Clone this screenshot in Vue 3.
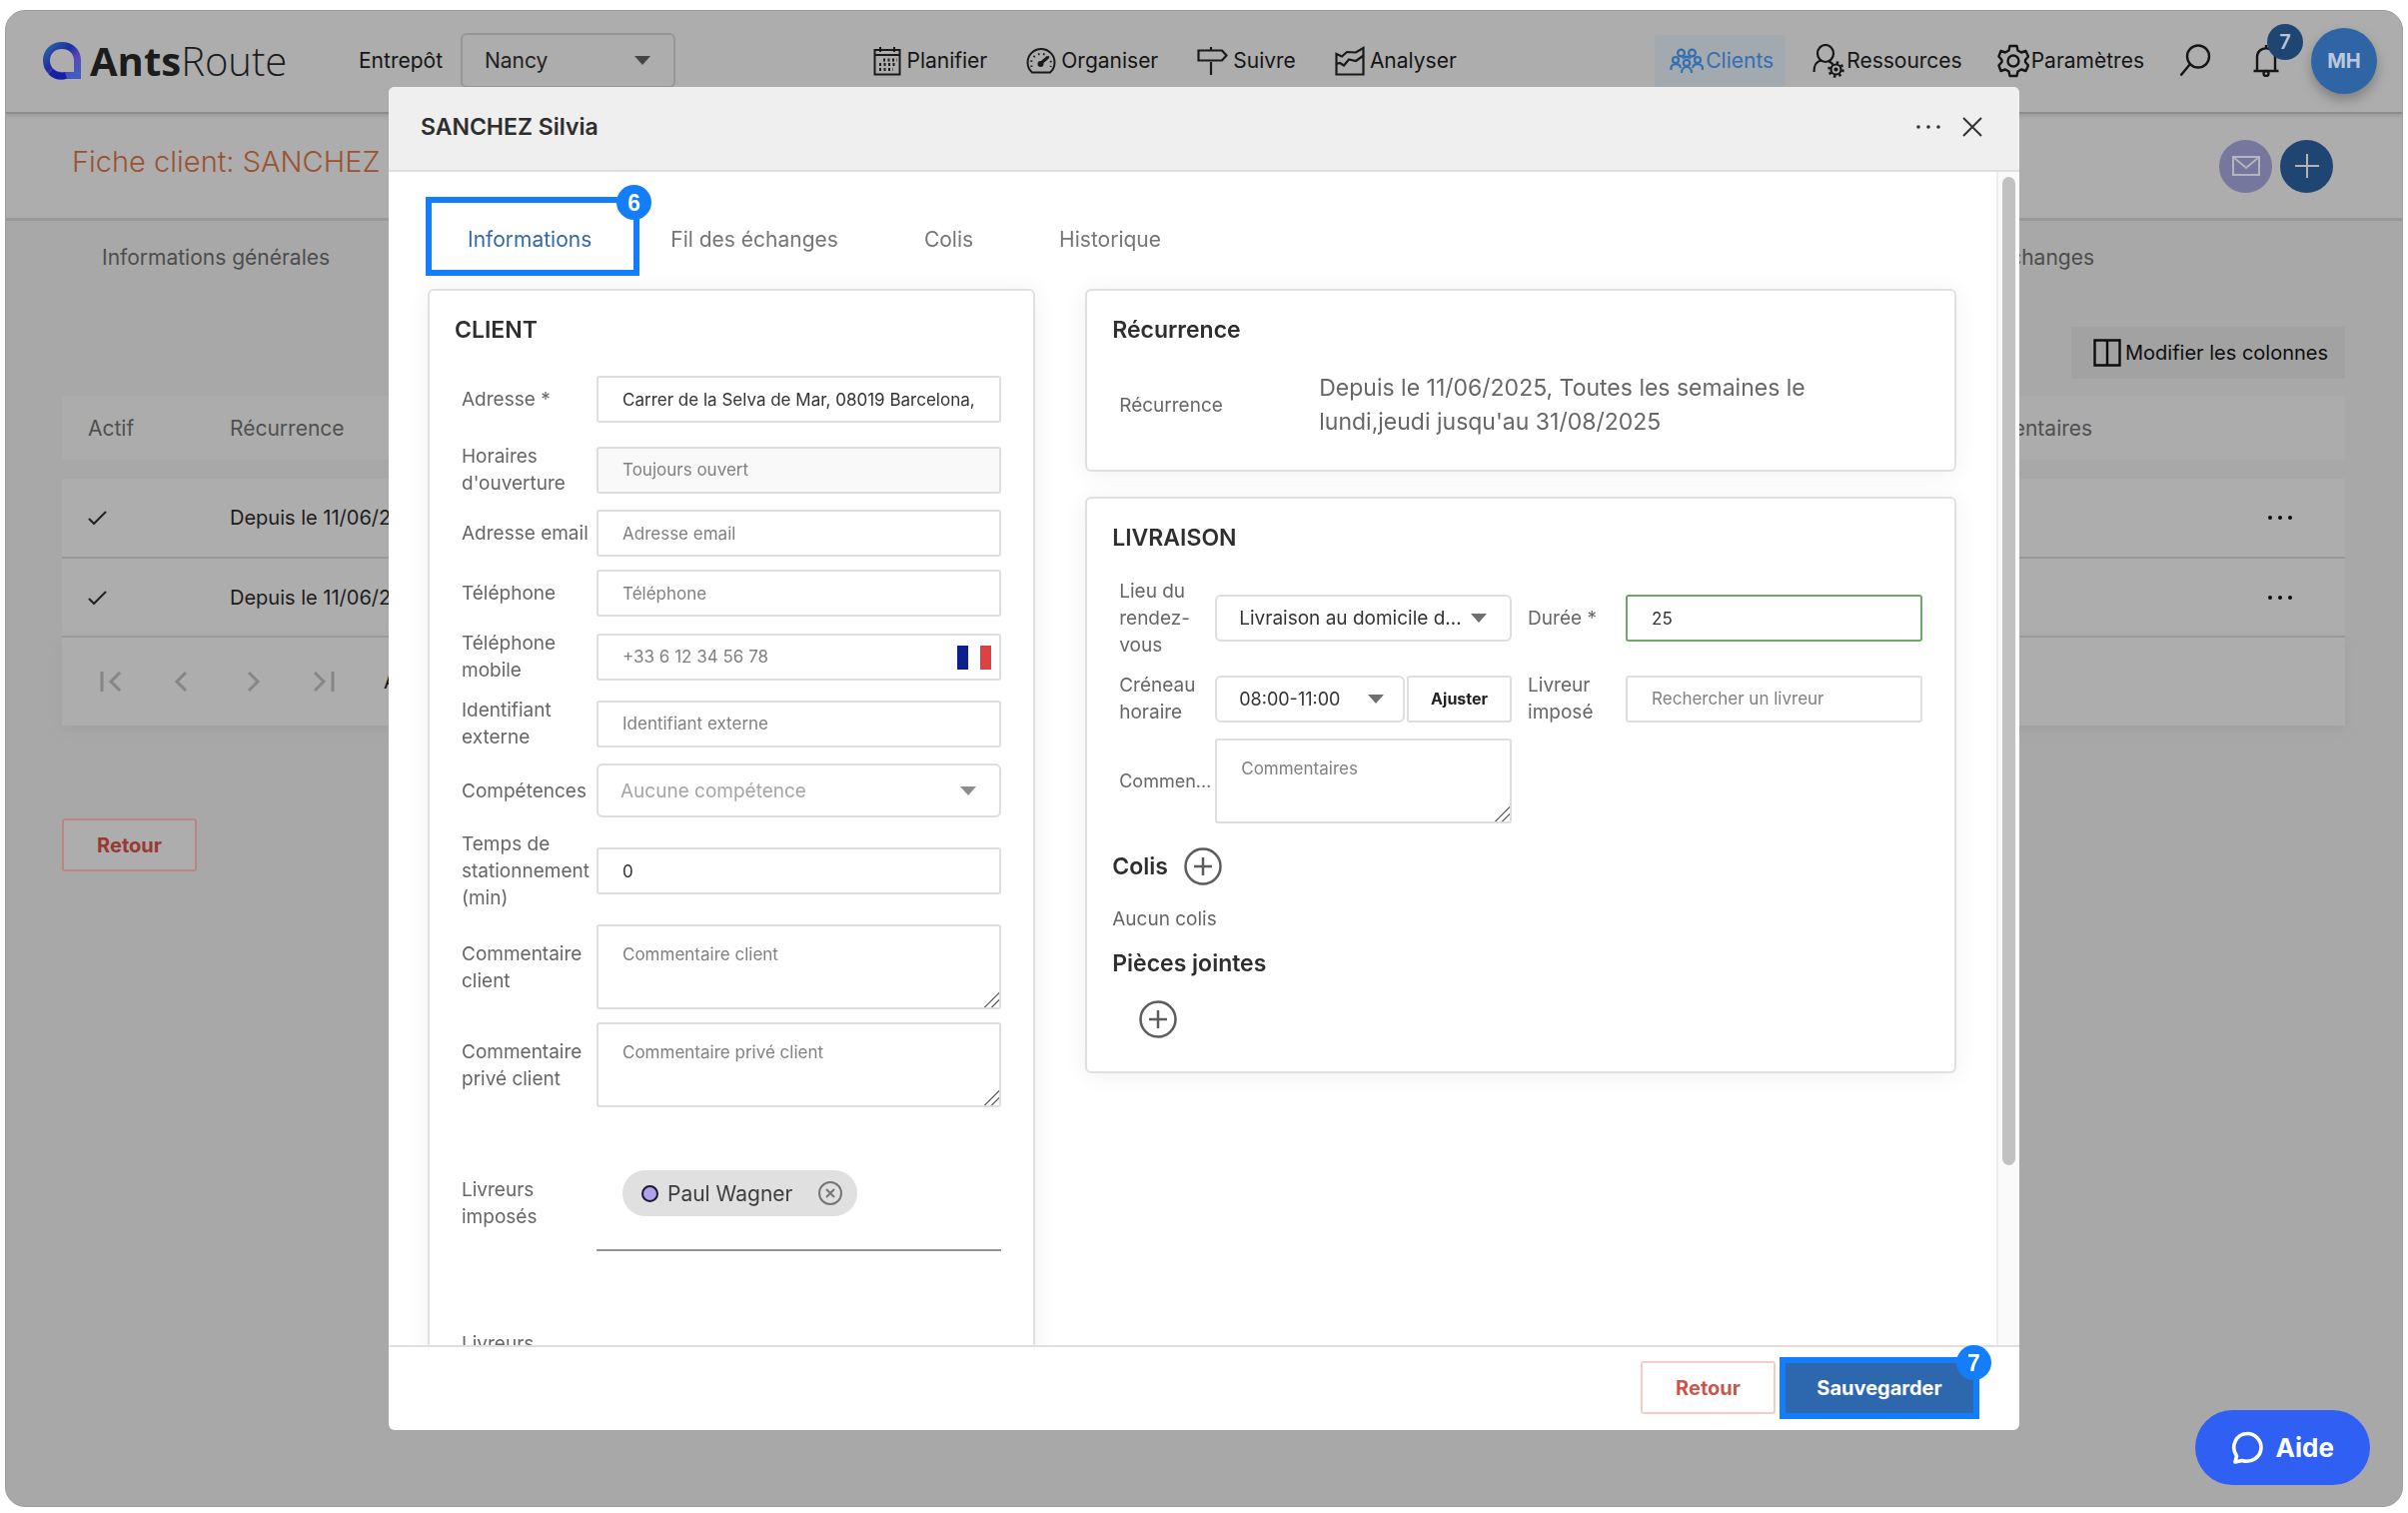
<script setup>
import { ref } from 'vue'

const mainNav = [
  { id: 'plan', label: 'Planifier' },
  { id: 'organise', label: 'Organiser' },
  { id: 'follow', label: 'Suivre' },
  { id: 'analyse', label: 'Analyser' },
]
const tabs = ['Fil des échanges', 'Colis', 'Historique']
const rows = [1, 2]

const address = ref('Carrer de la Selva de Mar, 08019 Barcelona,')
const parking = ref('0')
const duration = ref('25')
</script>

<template>
  <div class="frame">
    <header class="topbar">
      <a href="#" class="logo">
        <svg width="40" height="40" viewBox="0 0 40 40" aria-hidden="true">
          <defs>
            <linearGradient id="ring" x1="0" y1="0" x2="1" y2="1">
              <stop offset="0" stop-color="#2b62a8" />
              <stop offset="0.4" stop-color="#1d2fa0" />
              <stop offset="0.7" stop-color="#5a48b4" />
              <stop offset="1" stop-color="#3c5fc0" />
            </linearGradient>
          </defs>
          <path d="M20 4.500C11 4.500 4.500 11 4.500 19.500S11 34.500 20 34.500H35.500V19.500C35.500 11 29 4.500 20 4.500Z" fill="none" stroke="url(#ring)" stroke-width="7" />
          <path d="M9 31A15.500 15.500 0 0 0 24 34.500" fill="none" stroke="#1420a8" stroke-width="7" />
        </svg>
        <span class="wordmark"><b>Ants</b>Route</span>
      </a>
      <label for="depot" class="depot-label">Entrepôt</label>
      <div class="select depot">
        <select id="depot"><option>Nancy</option></select>
        <svg width="16" height="9" viewBox="0 0 16 9"><path d="M0 0H16L8 9Z" fill="#444" /></svg>
      </div>

      <nav class="main-nav">
        <a v-for="item in mainNav" :key="item.id" href="#" class="nav-item">
          <svg v-if="item.id === 'plan'" width="28" height="30" viewBox="0 0 28 30" fill="none" stroke="#1a1a1a" stroke-width="2">
            <path d="M1.500 4H26.500V28.500H1.500ZM1.500 9H26.500M7 1V6M21 1V6" />
            <path d="M10 14H24M6 18.500H24M6 23.500H20" stroke-width="3" stroke-dasharray="2 2.500" />
          </svg>
          <svg v-else-if="item.id === 'organise'" width="30" height="28" viewBox="0 0 30 28" fill="none" stroke="#1a1a1a" stroke-width="2">
            <path d="M6 25.500A13.500 13.500 0 1 1 24 25.500Z" />
            <path d="M14 17L22 10" stroke-width="3" /><circle cx="14.500" cy="17" r="2" fill="#1a1a1a" />
            <path d="M5.500 20A10 10 0 1 1 24.500 20" stroke-dasharray="1.500 3.700" />
          </svg>
          <svg v-else-if="item.id === 'follow'" width="31" height="30" viewBox="0 0 31 30" fill="none" stroke="#1a1a1a" stroke-width="2.200">
            <path d="M1.500 4.500H25L29.500 9.500L25 14.500H1.500ZM14 1V4.500M14 16V29" />
          </svg>
          <svg v-else width="30" height="30" viewBox="0 0 30 30" fill="none" stroke="#1a1a1a" stroke-width="2.200">
            <path d="M1.500 28.500V8L7 10.500L12 6L21 6.500L28.500 2V28.500ZM1.500 18L5 17L9 19.500L14 13.500L21 15L28 10" />
          </svg>
          <span>{{ item.label }}</span>
        </a>
      </nav>

      <nav class="side-nav">
        <a href="#" class="nav-item active">
          <svg width="34" height="26" viewBox="0 0 34 26" fill="none" stroke="#336fb1" stroke-width="2.200">
            <circle cx="11.500" cy="5" r="3.400" /><circle cx="22.500" cy="5" r="3.400" />
            <circle cx="6" cy="12" r="3" /><circle cx="28" cy="12" r="3" /><circle cx="17" cy="15" r="3.200" />
            <path d="M1.500 22V20C1.500 16 10 14 11 20M33 22V20C33 16 24 14 23 20M12 25C12 17 22 17 22 25M13 10.500Q17 7 21 10.500" />
          </svg>
          <span>Clients</span>
        </a>
        <a href="#" class="nav-item">
          <svg width="32" height="34" viewBox="0 0 32 34" fill="none" stroke="#151515" stroke-width="2.200">
            <ellipse cx="13" cy="9.500" rx="8" ry="8.500" />
            <path d="M1.500 28C1.500 20 5 17 9 16.500M16 17L19 19" />
            <circle cx="23.500" cy="25.500" r="5" /><circle cx="23.500" cy="25.500" r="1" />
            <circle cx="23.500" cy="25.500" r="7" stroke-dasharray="2.500 3" stroke-width="2.500" />
          </svg>
          <span>Ressources</span>
        </a>
        <a href="#" class="nav-item">
          <svg width="32" height="34" viewBox="0 0 32 34" fill="none" stroke="#151515" stroke-width="2.400" stroke-linejoin="round">
            <path d="M12.500 2H19.500L20.500 6.500L24 8.500L28.500 7L31 12.500L28 16V18L31 21.500L28.500 27L24 25.500L20.500 27.500L19.500 32H12.500L11.500 27.500L8 25.500L3.500 27L1.500 21.500L4.500 18V16L1.500 12.500L3.500 7L8 8.500L11.500 6.500Z" />
            <circle cx="16" cy="17" r="5.500" />
          </svg>
          <span>Paramètres</span>
        </a>
        <button class="icon-button" aria-label="Rechercher">
          <svg width="32" height="33" viewBox="0 0 32 33" fill="none" stroke="#151515" stroke-width="2.400">
            <circle cx="19" cy="12.500" r="11" /><path d="M11 20L1.500 31.500" />
          </svg>
        </button>
        <button class="icon-button bell" aria-label="Notifications">
          <svg width="26" height="33" viewBox="0 0 26 33" fill="none" stroke="#151515" stroke-width="2.400">
            <path d="M0.500 27H25.500M4 27V13C4 1.500 22 1.500 22 13V27M13 1V4.500" /><circle cx="13" cy="29.500" r="2.500" />
          </svg>
          <span class="count">7</span>
        </button>
        <button class="avatar">MH</button>
      </nav>
    </header>

    <div class="titlebar">
      <h1>Fiche client: SANCHEZ</h1>
      <div class="title-actions">
        <button class="round mail" aria-label="Envoyer un email">
          <svg width="28" height="20" viewBox="0 0 28 20" fill="none" stroke="#b4b4be" stroke-width="2"><path d="M1 1H27V19H1ZM1 1L14 12L27 1" /></svg>
        </button>
        <button class="round add" aria-label="Ajouter">
          <svg width="24" height="24" viewBox="0 0 24 24" stroke="#b4b4b4" stroke-width="2"><path d="M12 0V24M0 12H24" /></svg>
        </button>
      </div>
    </div>

    <nav class="page-tabs">
      <a href="#">Informations générales</a>
      <a href="#">Fil des échanges</a>
    </nav>

    <main class="page">
      <button class="columns-button">
        <svg width="28" height="28" viewBox="0 0 28 28" fill="none" stroke="#0d0d0d" stroke-width="2.400"><path d="M1.500 1.500H26.500V26.500H1.500ZM14 1.500V26.500" /></svg>
        Modifier les colonnes
      </button>
      <table class="history">
        <thead>
          <tr>
            <th class="col-state">Actif</th>
            <th>Récurrence</th>
            <th class="col-comment">Commentaires</th>
            <th class="col-menu"></th>
          </tr>
        </thead>
        <tbody>
          <tr v-for="r in rows" :key="r">
            <td>
              <svg width="20" height="16" viewBox="0 0 20 16" fill="none" stroke="#222" stroke-width="2"><path d="M1 9L6 14L18 2" /></svg>
            </td>
            <td>Depuis le 11/06/2025</td>
            <td></td>
            <td class="col-menu">
              <button class="icon-button" aria-label="Actions">
                <svg width="24" height="4" viewBox="0 0 24 4" fill="#0d0d0d"><circle cx="2" cy="2" r="2" /><circle cx="12" cy="2" r="2" /><circle cx="22" cy="2" r="2" /></svg>
              </button>
            </td>
          </tr>
        </tbody>
      </table>
      <div class="pager">
        <button class="icon-button" aria-label="Première page"><svg width="22" height="20" viewBox="0 0 22 20" class="chev"><path d="M2 0V20M20 1L11 10L20 19" /></svg></button>
        <button class="icon-button" aria-label="Page précédente"><svg width="22" height="20" viewBox="0 0 22 20" class="chev"><path d="M15 1L6 10L15 19" /></svg></button>
        <button class="icon-button" aria-label="Page suivante"><svg width="22" height="20" viewBox="0 0 22 20" class="chev"><path d="M7 1L16 10L7 19" /></svg></button>
        <button class="icon-button" aria-label="Dernière page"><svg width="22" height="20" viewBox="0 0 22 20" class="chev"><path d="M20 0V20M2 1L11 10L2 19" /></svg></button>
        <span>Affichage</span>
      </div>
      <button class="back dim">Retour</button>
    </main>

    <section class="modal" role="dialog" aria-labelledby="modal-title">
      <header class="modal-head">
        <h2 id="modal-title">SANCHEZ Silvia</h2>
        <button class="icon-button" aria-label="Plus d'actions">
          <svg width="24" height="4" viewBox="0 0 24 4" fill="#333"><circle cx="2" cy="2" r="1.800" /><circle cx="12" cy="2" r="1.800" /><circle cx="22" cy="2" r="1.800" /></svg>
        </button>
        <button class="icon-button" aria-label="Fermer">
          <svg width="20" height="20" viewBox="0 0 20 20" stroke="#333" stroke-width="2"><path d="M1 1L19 19M19 1L1 19" /></svg>
        </button>
      </header>

      <div class="modal-body">
        <div class="scroll-area">
          <nav class="tabs">
            <a href="#" class="tab marked">Informations<span class="step">6</span></a>
            <a v-for="t in tabs" :key="t" href="#" class="tab">{{ t }}</a>
          </nav>

          <div class="cards">
            <form class="card client">
              <h3>CLIENT</h3>
              <div class="row first"><label for="adr">Adresse *</label><input id="adr" v-model="address" type="text" /></div>
              <div class="row"><label for="hor">Horaires d'ouverture</label><input id="hor" type="text" class="muted" placeholder="Toujours ouvert" readonly /></div>
              <div class="row"><label for="mail">Adresse email</label><input id="mail" type="email" placeholder="Adresse email" /></div>
              <div class="row"><label for="tel">Téléphone</label><input id="tel" type="tel" placeholder="Téléphone" /></div>
              <div class="row">
                <label for="mob">Téléphone mobile</label>
                <div class="phone">
                  <input id="mob" type="tel" placeholder="+33 6 12 34 56 78" />
                  <svg width="34" height="24" viewBox="0 0 34 24"><path d="M0 0H11V24H0Z" fill="#0d1f8c" /><path d="M11 0H23V24H11Z" fill="#fff" /><path d="M23 0H34V24H23Z" fill="#dd4146" /></svg>
                </div>
              </div>
              <div class="row"><label for="ext">Identifiant externe</label><input id="ext" type="text" placeholder="Identifiant externe" /></div>
              <div class="row">
                <label for="skills">Compétences</label>
                <div class="select tall">
                  <select id="skills"><option>Aucune compétence</option></select>
                  <svg width="16" height="9" viewBox="0 0 16 9"><path d="M0 0H16L8 9Z" fill="#8d8d8d" /></svg>
                </div>
              </div>
              <div class="row"><label for="park">Temps de stationnement (min)</label><input id="park" v-model="parking" type="text" /></div>
              <div class="row"><label for="com">Commentaire client</label><textarea id="com" placeholder="Commentaire client"></textarea></div>
              <div class="row"><label for="priv">Commentaire privé client</label><textarea id="priv" placeholder="Commentaire privé client"></textarea></div>
              <div class="row drivers">
                <span class="label">Livreurs imposés</span>
                <div class="chips">
                  <span class="chip">
                    <i class="dot"></i>Paul Wagner
                    <button type="button" class="icon-button" aria-label="Retirer">
                      <svg width="24" height="24" viewBox="0 0 24 24" fill="none" stroke="#757575" stroke-width="2"><circle cx="12" cy="12" r="11" /><path d="M8 8L16 16M16 8L8 16" /></svg>
                    </button>
                  </span>
                </div>
              </div>
              <div class="row drivers-next"><span class="label">Livreurs interdits</span></div>
            </form>

            <div class="stack">
              <section class="card">
                <h3>Récurrence</h3>
                <div class="recurrence">
                  <span class="label">Récurrence</span>
                  <p>Depuis le 11/06/2025, Toutes les semaines le lundi,jeudi jusqu'au 31/08/2025</p>
                </div>
              </section>

              <form class="card delivery">
                <h3>LIVRAISON</h3>
                <div class="pair">
                  <label for="place">Lieu du rendez-vous</label>
                  <div class="select">
                    <select id="place"><option>Livraison au domicile du client</option></select>
                    <svg width="16" height="9" viewBox="0 0 16 9"><path d="M0 0H16L8 9Z" fill="#707070" /></svg>
                  </div>
                  <label for="dur" class="second">Durée *</label>
                  <input id="dur" v-model="duration" type="text" class="valid" />
                </div>
                <div class="pair">
                  <label for="slot">Créneau horaire</label>
                  <div class="slot">
                    <div class="select">
                      <select id="slot"><option>08:00-11:00</option></select>
                      <svg width="16" height="9" viewBox="0 0 16 9"><path d="M0 0H16L8 9Z" fill="#707070" /></svg>
                    </div>
                    <button type="button" class="adjust">Ajuster</button>
                  </div>
                  <label for="driver" class="second">Livreur imposé</label>
                  <input id="driver" type="text" placeholder="Rechercher un livreur" />
                </div>
                <div class="pair">
                  <label for="notes" class="clip">Commentaires</label>
                  <textarea id="notes" placeholder="Commentaires"></textarea>
                </div>
                <div class="parcels">
                  <h3>Colis</h3>
                  <button type="button" class="icon-button" aria-label="Ajouter un colis">
                    <svg width="38" height="38" viewBox="0 0 38 38" class="plus"><circle cx="19" cy="19" r="17.500" /><path d="M19 10V28M10 19H28" /></svg>
                  </button>
                </div>
                <p class="empty">Aucun colis</p>
                <h3 class="files">Pièces jointes</h3>
                <button type="button" class="icon-button attach" aria-label="Ajouter une pièce jointe">
                  <svg width="38" height="38" viewBox="0 0 38 38" class="plus"><circle cx="19" cy="19" r="17.500" /><path d="M19 10V28M10 19H28" /></svg>
                </button>
              </form>
            </div>
          </div>
        </div>
        <div class="track"><div class="thumb"></div></div>
      </div>

      <footer class="modal-foot">
        <button class="back">Retour</button>
        <button class="save">Sauvegarder<span class="step">7</span></button>
      </footer>
    </section>

    <button class="help">
      <svg width="32" height="34" viewBox="0 0 32 34" fill="none" stroke="#fff" stroke-width="3.600" stroke-linejoin="round" stroke-linecap="round">
        <path d="M4 31L5.500 25C-1 15 5 2.500 16.500 2.500C24 2.500 30 9 30 16.500C30 26 20 32.500 11 29.500Z" />
      </svg>
      Aide
    </button>
  </div>
</template>

<style>
body {
  margin: 0;
  background: #fff;
}
</style>

<style scoped>
* {
  box-sizing: border-box;
}
.frame {
  margin: 10px 5px 6px;
  min-height: calc(100vh - 16px);
  background: #a8a8a8;
  border: 1px solid #9c9c9c;
  border-radius: 20px;
  overflow: hidden;
  font-family: Inter, "Liberation Sans", sans-serif;
  font-size: 19px;
  color: #151515;
}
a {
  color: inherit;
  text-decoration: none;
}
h1,
h2,
h3,
p {
  margin: 0;
}
button,
input,
select,
textarea {
  font: inherit;
  color: inherit;
  margin: 0;
}
svg {
  display: block;
  flex: none;
}
.icon-button {
  display: block;
  padding: 0;
  border: 0;
  background: none;
}

/* Top bar */
.topbar {
  display: flex;
  align-items: center;
  height: 103px;
  padding: 0 25px 2px 36px;
  background: #adadad;
  border-bottom: 2px solid #8c8c8c;
  box-shadow: 0 2px 4px #999;
  position: relative;
}
.logo {
  display: flex;
  align-items: center;
  gap: 8px;
  width: 317px;
}
.wordmark {
  font-family: "Open Sans", sans-serif;
  font-size: 40px;
  font-weight: 300;
  line-height: 60px;
  color: #1c1c1c;
}
.wordmark b {
  font-weight: 700;
}
.depot-label {
  width: 102px;
  font-size: 21px;
}
.select {
  position: relative;
  display: flex;
  align-items: center;
  height: 47px;
  min-width: 0;
}
.select select {
  appearance: none;
  width: 100%;
  height: 100%;
  padding: 0 44px 0 22px;
  border: 2px solid #dedede;
  border-radius: 6px;
  background: none;
  font-size: 19px;
  color: #333;
  text-overflow: ellipsis;
}
.select svg {
  position: absolute;
  right: 25px;
}
.select.depot {
  width: 215px;
  height: 55px;
}
.select.depot select {
  border-color: #969696;
  font-size: 21px;
  color: #222;
}
.select.tall {
  height: 54px;
}
.select.tall select {
  color: #a5a5a5;
}
.main-nav,
.side-nav {
  display: flex;
  align-items: center;
}
.main-nav {
  gap: 39px;
  margin: 0 auto;
}
.nav-item {
  display: flex;
  align-items: center;
  gap: 5px;
  font-size: 21px;
}
.side-nav .nav-item {
  gap: 2px;
  margin-right: 35px;
}
.side-nav .nav-item.active {
  height: 52px;
  padding: 0 12px 0 15px;
  margin-right: 27px;
  background: #a2a9af;
  border-radius: 4px;
  color: #336fb1;
}
.bell {
  position: relative;
  margin: 0 32px 0 42px;
}
.count {
  position: absolute;
  left: 14px;
  top: -20px;
  width: 36px;
  height: 36px;
  border-radius: 50%;
  background: #1f4573;
  color: #b8c4d2;
  font-size: 20px;
  font-weight: 600;
  line-height: 36px;
}
.avatar {
  width: 66px;
  height: 66px;
  padding: 0;
  border: 0;
  border-radius: 50%;
  background: #2f64a5;
  box-shadow: 0 6px 12px #808080;
  color: #bac8dc;
  font-size: 20px;
  font-weight: 700;
}

/* Page behind the dialog */
.titlebar {
  display: flex;
  align-items: center;
  justify-content: space-between;
  height: 107px;
  padding: 0 69px 0 66px;
  background: #adadad;
  border-bottom: 3px solid #989898;
}
.titlebar h1 {
  padding-bottom: 9px;
  font-size: 29px;
  font-weight: 300;
  color: #9a5330;
}
.title-actions {
  display: flex;
  gap: 8px;
}
.round {
  display: flex;
  align-items: center;
  justify-content: center;
  width: 53px;
  height: 53px;
  padding: 0;
  border: 0;
  border-radius: 50%;
}
.mail {
  background: #75779d;
}
.add {
  background: #1f4573;
}
.page-tabs {
  display: flex;
  justify-content: space-between;
  padding: 23px 308px 0 96px;
  line-height: 28px;
  font-size: 21px;
  color: #4d4d4d;
}
.page {
  padding: 55px 57px 0 56px;
}
.columns-button {
  display: flex;
  align-items: center;
  gap: 4px;
  height: 52px;
  margin: 0 0 17px auto;
  padding: 0 17px 0 22px;
  border: 0;
  background: #a2a2a2;
  font-size: 20px;
  color: #0d0d0d;
}
.history {
  width: 100%;
  border-collapse: collapse;
  table-layout: fixed;
  font-size: 20px;
}
.history th {
  height: 64px;
  padding: 0 26px;
  background: #acacac;
  font-size: 21px;
  font-weight: 400;
  text-align: left;
  color: #505050;
}
.history tbody::before {
  content: "";
  display: block;
  height: 19px;
}
.history td {
  height: 79px;
  padding: 0 26px;
  background: #adadad;
  border-bottom: 2px solid #999;
  color: #1c1c1c;
}
.history .col-state {
  width: 142px;
}
.history .col-comment {
  width: 293px;
}
.history .col-menu {
  width: 130px;
  padding: 0 53px;
}
.pager {
  display: flex;
  align-items: center;
  gap: 49px;
  height: 88px;
  padding-left: 38px;
  background: #adadad;
  box-shadow: 0 4px 10px #a0a0a0;
  font-size: 20px;
}
.chev {
  fill: none;
  stroke: #868686;
  stroke-width: 3;
}
.back {
  width: 135px;
  height: 53px;
  padding: 0;
  border: 2px solid #f0cdc9;
  border-radius: 3px;
  background: #fff;
  color: #cd564c;
  font-size: 20px;
  font-weight: 700;
}
.back.dim {
  display: block;
  margin-top: 93px;
  border-color: #b98682;
  background: #adadad;
  color: #973a33;
}

/* Dialog */
.modal {
  position: fixed;
  top: 87px;
  bottom: 83px;
  left: 50%;
  width: 68%;
  max-width: 1632px;
  transform: translateX(-50%);
  display: flex;
  flex-direction: column;
  background: #fff;
  border-radius: 6px;
  color: #666;
}
.modal-head {
  display: flex;
  align-items: center;
  gap: 22px;
  height: 85px;
  flex: none;
  padding: 0 37px 3px 32px;
  background: #efefef;
  border-bottom: 2px solid #dfdfdf;
  border-radius: 6px 6px 0 0;
}
.modal-head h2 {
  margin-right: auto;
  font-size: 23px;
  font-weight: 600;
  color: #2e2e2e;
}
.modal-body {
  display: flex;
  flex: 1;
  min-height: 0;
}
.scroll-area {
  flex: 1;
  min-width: 0;
  overflow: hidden;
}
.track {
  width: 23px;
  padding: 5px 4px;
  border-left: 2px solid #ececec;
  background: #fafafa;
}
.thumb {
  height: 85%;
  border-radius: 7px;
  background: #c1c1c1;
}
.tabs {
  display: flex;
  padding: 25px 37px 13px;
  font-size: 21px;
  color: #757575;
}
.tab {
  display: flex;
  align-items: center;
  height: 79px;
  padding: 6px 43px 0;
}
.tab.marked {
  position: relative;
  padding: 5px 42px 0 36px;
  margin-right: -12px;
  border: 6px solid #147dfa;
  color: #3468a6;
}
.step {
  position: absolute;
  top: -18px;
  right: -18px;
  width: 35px;
  height: 35px;
  border-radius: 50%;
  background: #147dfa;
  color: #fff;
  font-family: "Liberation Sans", sans-serif;
  font-size: 23px;
  font-weight: 700;
  line-height: 36px;
  text-align: center;
}
.cards {
  display: grid;
  grid-template-columns: 607fr 870fr;
  gap: 50px;
  align-items: start;
  padding: 0 40px 0 39px;
}
.stack {
  display: grid;
  gap: 25px;
}
.card {
  min-width: 0;
  padding: 25px 32px 26px;
  border: 2px solid #e0e0e0;
  border-radius: 6px;
  background: #fff;
  box-shadow: 0 2px 24px #f0f0f0;
}
.card h3 {
  margin-left: -7px;
  font-size: 23px;
  font-weight: 600;
  line-height: 28px;
  color: #2e2e2e;
}
.card label,
.label {
  font-size: 19px;
  line-height: 27px;
  color: #666;
}
.row {
  display: grid;
  grid-template-columns: 135px 1fr;
  align-items: center;
  padding: 6px 0 7px;
}
.row.first {
  padding-top: 32px;
  padding-bottom: 14px;
}
.card input,
.card textarea {
  display: block;
  width: 100%;
  min-width: 0;
  height: 47px;
  padding: 0 24px;
  border: 2px solid #dedede;
  border-radius: 3px;
  background: #fff;
  outline: 0;
  font-size: 17px;
  color: #333;
}
.card textarea {
  height: 85px;
  padding: 16px 24px;
  line-height: 24px;
  resize: both;
}
.card textarea::-webkit-resizer {
  background: linear-gradient(135deg, transparent 0 48%, #777 48% 56%, transparent 56% 72%, #777 72% 80%, transparent 80%);
}
.card input::placeholder,
.card textarea::placeholder {
  color: #808080;
  opacity: 1;
}
.card input.muted {
  background: #f9f9f9;
}
.card input.valid {
  border-color: #6ea867;
}
.phone {
  position: relative;
}
.phone svg {
  position: absolute;
  right: 10px;
  top: 12px;
}
.drivers {
  height: 178px;
}
.chips {
  display: flex;
  align-items: flex-start;
  height: 81px;
  padding-left: 26px;
  margin-top: 16px;
  border-bottom: 2px solid #949494;
}
.chip {
  display: flex;
  align-items: center;
  height: 46px;
  padding: 0 15px 0 19px;
  border-radius: 23px;
  background: #e0e0e0;
  font-size: 21px;
  color: #3d3d3d;
}
.chip .icon-button {
  margin-left: 26px;
}
.dot {
  width: 17px;
  height: 17px;
  margin-right: 9px;
  border: 2px solid #1c1733;
  border-radius: 50%;
  background: #b0a2ea;
}
.drivers-next {
  height: 130px;
}
.recurrence {
  display: grid;
  grid-template-columns: 200px 1fr;
  align-items: center;
  padding: 27px 110px 5px 0;
}
.recurrence p {
  font-size: 23px;
  line-height: 34px;
  color: #666;
}
.delivery {
  padding-bottom: 33px;
}
.delivery > h3 {
  margin-bottom: 20px;
}
.pair {
  display: grid;
  grid-template-columns: 96px 1fr 114px 1fr;
  align-items: center;
  padding: 6px 0 7px;
}
.pair .second {
  padding-left: 16px;
}
.pair .clip {
  overflow: hidden;
  white-space: nowrap;
  text-overflow: ellipsis;
  font-size: 18px;
}
.slot {
  display: grid;
  grid-template-columns: 1fr 105px;
  gap: 2px;
}
.slot select {
  padding-right: 40px;
  font-size: 18px;
}
.slot .select svg {
  right: 21px;
}
.adjust {
  padding: 0;
  border: 2px solid #dedede;
  border-radius: 3px;
  background: #fff;
  font-size: 16px;
  font-weight: 700;
  color: #222;
}
.parcels {
  display: flex;
  align-items: center;
  gap: 16px;
  margin-top: 17px;
}
.plus {
  fill: none;
  stroke: #5c5c5c;
  stroke-width: 2.5;
}
.empty {
  margin: 20px 0 16px -7px;
  font-size: 19px;
  line-height: 28px;
}
.delivery .files {
  margin-bottom: 23px;
}
.attach {
  margin-left: 20px;
}
.modal-foot {
  display: flex;
  align-items: center;
  justify-content: flex-end;
  gap: 4px;
  flex: none;
  height: 85px;
  padding: 0 40px 2px 0;
  border-top: 2px solid #dfdfdf;
}
.save {
  position: relative;
  width: 200px;
  height: 62px;
  padding: 0;
  border: 6px solid #147dfa;
  background: #2d68ae;
  color: #fff;
  font-size: 20px;
  font-weight: 700;
}
.help {
  position: fixed;
  right: 38px;
  bottom: 28px;
  display: flex;
  align-items: center;
  gap: 13px;
  height: 75px;
  padding: 0 36px;
  border: 0;
  border-radius: 38px;
  background: #2f60f3;
  color: #fff;
  font-size: 26px;
  font-weight: 700;
}
</style>
